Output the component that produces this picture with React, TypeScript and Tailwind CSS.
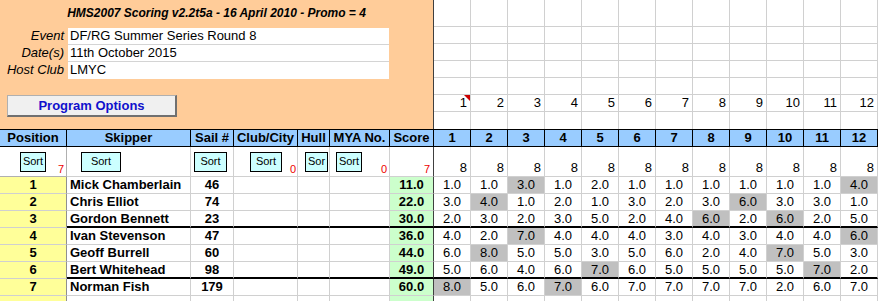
import React from "react";

const GRID = "grid grid-cols-[67px_124px_43px_64px_32px_60px_44px_repeat(12,37px)]";

type Row = { pos: number; name: string; sail: string; score: string; races: string[]; drop: number[]; thick?: boolean };

const rows: Row[] = [
  { pos: 1, name: "Mick Chamberlain", sail: "46", score: "11.0", races: ["1.0","1.0","3.0","1.0","2.0","1.0","1.0","1.0","1.0","1.0","1.0","4.0"], drop: [2, 11] },
  { pos: 2, name: "Chris Elliot", sail: "74", score: "22.0", races: ["3.0","4.0","1.0","2.0","1.0","3.0","2.0","3.0","6.0","3.0","3.0","1.0"], drop: [1, 8] },
  { pos: 3, name: "Gordon Bennett", sail: "23", score: "30.0", races: ["2.0","3.0","2.0","3.0","5.0","2.0","4.0","6.0","2.0","6.0","2.0","5.0"], drop: [7, 9], thick: true },
  { pos: 4, name: "Ivan Stevenson", sail: "47", score: "36.0", races: ["4.0","2.0","7.0","4.0","4.0","4.0","3.0","4.0","3.0","4.0","4.0","6.0"], drop: [2, 11] },
  { pos: 5, name: "Geoff Burrell", sail: "60", score: "44.0", races: ["6.0","8.0","5.0","5.0","3.0","5.0","6.0","2.0","4.0","7.0","5.0","3.0"], drop: [1, 9] },
  { pos: 6, name: "Bert Whitehead", sail: "98", score: "49.0", races: ["5.0","6.0","4.0","6.0","7.0","6.0","5.0","5.0","5.0","5.0","7.0","2.0"], drop: [4, 10], thick: true },
  { pos: 7, name: "Norman Fish", sail: "179", score: "60.0", races: ["8.0","5.0","6.0","7.0","6.0","7.0","7.0","7.0","7.0","2.0","6.0","7.0"], drop: [0, 3] },
];

const races = Array.from({ length: 12 }, (_, i) => i + 1);
const headers = ["Position", "Skipper", "Sail #", "Club/City", "Hull", "MYA No.", "Score"];

function SortBtn({ w, label = "Sort" }: { w: string; label?: string }) {
  return (
    <div className={`${w} h-[20px] bg-[#ccffff] border border-black flex items-start justify-center pt-[2px] text-[11px] leading-[13px] overflow-hidden`}>
      {label}
    </div>
  );
}

function Red({ v, r }: { v: string; r: string }) {
  return <span className={`absolute ${r} bottom-[1px] text-[11px] leading-[11px] text-[#ee0000]`}>{v}</span>;
}

export default function App() {
  return (
    <div className="w-[878px] h-[301px] overflow-hidden bg-white text-black font-['Liberation_Sans',Arial,sans-serif]">
      {/* top section */}
      <div className="flex h-[129px]">
        <div className="w-[434px] h-[129px] bg-[#ffcc99] border-r border-[#404040] flex flex-col">
          <div className="h-[28px] pt-[5px] text-center text-[12px] leading-[16px] font-bold italic">
            HMS2007 Scoring v2.2t5a - 16 April 2010 - Promo = 4
          </div>
          {[
            ["Event", "DF/RG Summer Series Round 8"],
            ["Date(s)", "11th October 2015"],
            ["Host Club", "LMYC"],
          ].map(([l, v], i) => (
            <div key={l} className="flex h-[17px]">
              <div className="w-[68px] pr-[4px] text-right italic text-[13px] leading-[16px]">{l}</div>
              <div className={`w-[321px] bg-white pl-[2px] text-[13px] leading-[16px] ${i < 2 ? "border-b border-[#d4d4d4]" : ""}`}>{v}</div>
            </div>
          ))}
          <div className="mt-[16px] ml-[7px] w-[170px] h-[22px] bg-[#f0f0f0] border border-[#b0b0b0] border-r-2 border-b-2 border-r-[#707070] border-b-[#707070] flex items-center justify-center text-[13px] font-bold text-[#1010cc]">
            Program Options
          </div>
        </div>
        <div className="grid grid-cols-[repeat(12,37px)] grid-rows-[27px_17px_17px_17px_17px_17px_17px] w-[444px] h-[129px]">
          {Array.from({ length: 7 }).map((_, r) =>
            races.map((n) => (
              <div
                key={`${r}-${n}`}
                className={`relative border-r border-[#d0d0d0] ${r < 6 ? "border-b" : ""} ${r === 5 ? "flex items-center justify-end pr-[3px] text-[13px] leading-[16px]" : ""}`}
              >
                {r === 5 ? n : null}
                {r === 5 && n === 1 ? (
                  <svg className="absolute right-0 top-0" width="6" height="6" viewBox="0 0 6 6">
                    <polygon points="0,0 6,0 6,6" fill="#cc0000" />
                  </svg>
                ) : null}
              </div>
            ))
          )}
        </div>
      </div>

      {/* header row */}
      <div className={`${GRID} h-[18px] border-y border-black bg-[#99ccff]`}>
        {headers.map((h) => (
          <div key={h} className="border-r border-black flex items-center justify-center text-[13px] leading-[16px] font-bold whitespace-nowrap overflow-hidden">
            {h}
          </div>
        ))}
        {races.map((n) => (
          <div key={n} className="border-r border-black flex items-center justify-center text-[13px] leading-[16px] font-bold">
            {n}
          </div>
        ))}
      </div>

      {/* sort row */}
      <div className={`${GRID} h-[30px]`}>
        <div className="relative border-r border-b border-[#b0b0b0] flex justify-center pt-[5px]">
          <SortBtn w="w-[26px]" />
          <Red v="7" r="right-[2px]" />
        </div>
        <div className="relative border-r border-b border-[#d0d0d0] flex pl-[14px] pt-[5px]">
          <SortBtn w="w-[40px]" />
        </div>
        <div className="relative border-r border-b border-[#d0d0d0] flex pl-[3px] pt-[5px]">
          <SortBtn w="w-[33px]" />
        </div>
        <div className="relative border-r border-b border-[#d0d0d0] flex pl-[16px] pt-[5px]">
          <SortBtn w="w-[32px]" />
          <Red v="0" r="right-[1px]" />
        </div>
        <div className="relative border-r border-b border-[#d0d0d0] flex pl-[7px] pt-[5px]">
          <SortBtn w="w-[23px]" label="Sor" />
        </div>
        <div className="relative border-r border-b border-[#d0d0d0] flex pl-[6px] pt-[5px]">
          <SortBtn w="w-[26px]" />
          <Red v="0" r="right-[2px]" />
        </div>
        <div className="relative border-r border-b border-[#404040] border-b-[#d0d0d0]">
          <Red v="7" r="right-[3px]" />
        </div>
        {races.map((n) => (
          <div key={n} className="border-r border-b border-[#d0d0d0] flex items-end justify-end pr-[3px] text-[13px] leading-[16px]">
            8
          </div>
        ))}
      </div>

      {/* data rows */}
      {rows.map((row) => {
        const b = row.thick ? "border-b-2 border-b-black" : "border-b border-b-[#d0d0d0]";
        const c = "text-[13px] leading-[16px] whitespace-nowrap overflow-hidden";
        return (
          <div key={row.pos} className={`${GRID} h-[17px]`}>
            <div className={`bg-[#ffff99] border-r border-r-[#909090] border-b border-b-[#d0d0d0] text-center font-bold ${c}`}>{row.pos}</div>
            <div className={`border-r border-r-[#d0d0d0] ${b} pl-[3px] font-bold ${c}`}>{row.name}</div>
            <div className={`border-r border-r-[#d0d0d0] ${b} text-center font-bold ${c}`}>{row.sail}</div>
            <div className={`border-r border-r-[#d0d0d0] ${b}`} />
            <div className={`border-r border-r-[#d0d0d0] ${b}`} />
            <div className={`border-r border-r-[#d0d0d0] ${b}`} />
            <div className={`bg-[#ccffcc] border-r border-r-[#404040] ${b} text-center font-bold ${c}`}>{row.score}</div>
            {row.races.map((v, i) => (
              <div key={i} className={`${row.drop.includes(i) ? "bg-[#c0c0c0]" : ""} border-r border-r-[#d0d0d0] ${b} text-center ${c}`}>
                {v}
              </div>
            ))}
          </div>
        );
      })}
      <div className={`${GRID} h-[17px]`}>
        <div className="bg-[#ffff99] border-r border-r-[#909090]" />
        <div className="border-r border-r-[#d0d0d0]" />
        <div className="border-r border-r-[#d0d0d0]" />
        <div className="border-r border-r-[#d0d0d0]" />
        <div className="border-r border-r-[#d0d0d0]" />
        <div className="border-r border-r-[#d0d0d0]" />
        <div className="bg-[#ccffcc] border-r border-r-[#404040]" />
        {races.map((n) => (
          <div key={n} className="border-r border-r-[#d0d0d0]" />
        ))}
      </div>
    </div>
  );
}
